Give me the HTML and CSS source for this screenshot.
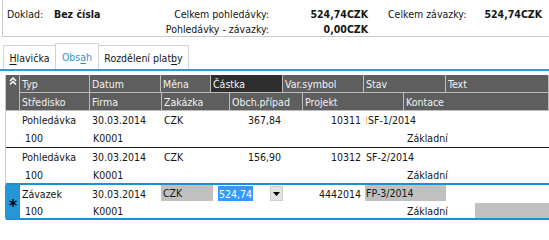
FILE: index.html
```html
<!DOCTYPE html>
<html lang="cs">
<head>
<meta charset="utf-8">
<title>Doklad</title>
<link rel="stylesheet" href="styles.css">
</head>
<body>
<div class="summary">
  <span class="s-lbl c1 r1">Doklad:</span>
  <span class="s-bold c2 r1">Bez čísla</span>
  <span class="s-lbl c3 r1 right">Celkem pohledávky:</span>
  <span class="s-bold c4 r1 right">524,74CZK</span>
  <span class="s-lbl c6 r1">Celkem závazky:</span>
  <span class="s-bold c7 r1 right">524,74CZK</span>
  <span class="s-lbl c3 r2 right">Pohledávky - závazky:</span>
  <span class="s-bold c4 r2 right">0,00CZK</span>
</div>

<div class="tabs">
  <div class="tab t1"><u>H</u>lavička</div>
  <div class="tab t2 active">Obs<u>a</u>h</div>
  <div class="tab t3">Rozdělení plat<u>b</u>y</div>
</div>

<div class="grid">
  <div class="ghead">
    <div class="hsel">
      <svg class="chev" width="8" height="8" viewBox="0 0 8 8"><polyline points="1,4 4,1 7,4" fill="none" stroke="#fff" stroke-width="1.5"/><polyline points="1,7.5 4,4.5 7,7.5" fill="none" stroke="#fff" stroke-width="1.5"/></svg>
    </div>
    <div class="hbody">
      <div class="hrow">
        <div class="hc w70">Typ</div>
        <div class="hc w71">Datum</div>
        <div class="hc w50">Měna</div>
        <div class="hc w72 sorted">Částka</div>
        <div class="hc w81">Var.symbol</div>
        <div class="hc w82">Stav</div>
        <div class="hc grow">Text</div>
      </div>
      <div class="hrow">
        <div class="hc w70">Středisko</div>
        <div class="hc w72">Firma</div>
        <div class="hc w68">Zakázka</div>
        <div class="hc w73">Obch.případ</div>
        <div class="hc w101">Projekt</div>
        <div class="hc grow">Kontace</div>
      </div>
    </div>
  </div>

  <div class="rec">
    <div class="rsel"></div>
    <div class="rbody">
      <div class="line">
        <div class="c w70">Pohledávka</div>
        <div class="c w71">30.03.2014</div>
        <div class="c w50 pl3">CZK</div>
        <div class="c w72 num">367,84</div>
        <div class="c w81 num2">10311</div>
        <div class="c w82"><span class="caret"></span>SF-1/2014</div>
        <div class="c grow"></div>
      </div>
      <div class="line">
        <div class="c w70 pl5">100</div>
        <div class="c w72 pl3">K0001</div>
        <div class="c w68"></div>
        <div class="c w73"></div>
        <div class="c w101"></div>
        <div class="c grow pl3">Základní</div>
      </div>
    </div>
  </div>

  <div class="rec">
    <div class="rsel"></div>
    <div class="rbody">
      <div class="line">
        <div class="c w70">Pohledávka</div>
        <div class="c w71">30.03.2014</div>
        <div class="c w50 pl3">CZK</div>
        <div class="c w72 num">156,90</div>
        <div class="c w81 num2">10312</div>
        <div class="c w82 pl2">SF-2/2014</div>
        <div class="c grow"></div>
      </div>
      <div class="line">
        <div class="c w70 pl5">100</div>
        <div class="c w72 pl3">K0001</div>
        <div class="c w68"></div>
        <div class="c w73"></div>
        <div class="c w101"></div>
        <div class="c grow pl3">Základní</div>
      </div>
    </div>
  </div>

  <div class="rec selected">
    <div class="rsel blue">
      <svg width="8" height="8" viewBox="0 0 8 8"><g stroke="#000" stroke-width="1.3"><line x1="4" y1="0" x2="4" y2="8"/><line x1="0.5" y1="2" x2="7.5" y2="6"/><line x1="0.5" y1="6" x2="7.5" y2="2"/></g></svg>
    </div>
    <div class="rbody">
      <div class="line l1">
        <div class="c w70">Závazek</div>
        <div class="c w71">30.03.2014</div>
        <div class="c w52 graycell">CZK</div>
        <div class="c w70 editor">
          <span class="seltext">524,74</span>
          <span class="dd"><svg width="7" height="4" viewBox="0 0 7 4"><polygon points="0,0 7,0 3.5,4" fill="#000"/></svg></span>
        </div>
        <div class="c w81 num2">4442014</div>
        <div class="c w82 graycell stav">FP-3/2014</div>
        <div class="c grow"></div>
      </div>
      <div class="line l2">
        <div class="c w70 pl5">100</div>
        <div class="c w72 pl3">K0001</div>
        <div class="c w68"></div>
        <div class="c w73"></div>
        <div class="c w101"></div>
        <div class="c grow pl3 kontace"><span>Základní</span><span class="grayfill"></span></div>
      </div>
    </div>
  </div>
</div>
</body>
</html>
```

FILE: styles.css
```css
* { box-sizing: border-box; }

body {
  margin: 0;
  width: 549px;
  height: 220px;
  overflow: hidden;
  background: #fff;
  color: #151515;
  font-family: "DejaVu Sans Condensed", "DejaVu Sans", sans-serif;
  font-stretch: condensed;
  font-size: 10.5px;
}

/* summary panel */
.summary {
  margin-left: 2px;
  height: 37px;
  padding: 6px 0 0 4px;
  border-left: 1px solid #c9c9c9;
  border-bottom: 1px solid #c9c9c9;
  display: grid;
  grid-template-columns: 47px 60px 155px 99px 20px 80px 74px;
  grid-template-rows: 15px 15px;
  align-items: center;
  white-space: nowrap;
}
.s-bold { font-weight: bold; }
.right { text-align: right; }
.c1 { grid-column: 1; }
.c2 { grid-column: 2; }
.c3 { grid-column: 3; }
.c4 { grid-column: 4; }
.c6 { grid-column: 6; }
.c7 { grid-column: 7; }
.r1 { grid-row: 1; }
.r2 { grid-row: 2; }

/* tabs */
.tabs {
  height: 34px;
  padding-left: 3px;
  display: flex;
  align-items: flex-end;
  border-bottom: 2px solid #2a9ed6;
}
.tab {
  height: 24px;
  border: 1px solid #d3d3d3;
  border-bottom: none;
  margin-right: -1px;
  display: flex;
  align-items: center;
  justify-content: center;
  white-space: nowrap;
}
.tab u { text-decoration: underline; text-underline-offset: 2px; }
.t1 { width: 53px; }
.t2 { width: 44px; }
.t3 { width: 91px; }
.tab.active {
  height: 26px;
  padding-top: 1px;
  color: #2f95cf;
  position: relative;
  z-index: 1;
}

/* grid */
.grid {
  margin: 4px 0 0 5px;
  border-left: 1px solid #c8c8c8;
}
.ghead { display: flex; height: 36px; }
.hsel {
  width: 14px;
  flex: none;
  background: #5e5e5e;
  border-right: 1px solid #bdbdbd;
  border-bottom: 1px solid #bdbdbd;
  padding: 2px 0 0 3px;
}
.chev { display: block; }
.hbody { flex: 1; display: flex; flex-direction: column; }
.hrow { display: flex; height: 18px; }
.hc {
  flex: none;
  height: 18px;
  padding: 0 2px;
  background: #5e5e5e;
  color: #f2f2f2;
  border-right: 1px solid #bdbdbd;
  border-bottom: 1px solid #bdbdbd;
  display: flex;
  align-items: center;
  white-space: nowrap;
  overflow: hidden;
}
.hc.sorted { background: #2e2e2e; }
.hc.grow, .c.grow { flex: 1; }

.w50 { width: 50px; }
.w52 { width: 52px; }
.w68 { width: 68px; }
.w70 { width: 70px; }
.w71 { width: 71px; }
.w72 { width: 72px; }
.w73 { width: 73px; }
.w81 { width: 81px; }
.w82 { width: 82px; }
.w101 { width: 101px; }

.rec {
  display: flex;
  border-bottom: 1px solid #1c1c1c;
}
.rsel { width: 14px; flex: none; }
.rbody { flex: 1; display: flex; flex-direction: column; }
.line { display: flex; height: 18px; }
.c {
  flex: none;
  padding: 0 2px;
  display: flex;
  align-items: center;
  white-space: nowrap;
  overflow: hidden;
}
.pl2 { padding-left: 2px; }
.pl3 { padding-left: 3px; }
.pl5 { padding-left: 5px; }
.num { justify-content: flex-end; padding-right: 2px; }
.num2 { justify-content: flex-end; padding-right: 3px; }
.caret {
  display: inline-block;
  width: 1px;
  height: 9px;
  background: #f3c891;
  margin-right: 1px;
}

/* selected record */
.rec.selected {
  margin-top: -2px;
  border-top: 2px solid #1e8fd3;
  border-bottom: 2px solid #1e8fd3;
}
.rsel.blue {
  background: #2596d8;
  margin-left: -1px;
  width: 15px;
  display: flex;
  align-items: center;
  justify-content: center;
  padding-top: 2px;
}
.line.l2 { height: 15px; }
.graycell {
  background: #c0c0c0;
  margin-bottom: 2px;
}
.stav { margin-left: 1px; width: 81px; padding-left: 1px; }
.editor { padding: 1px 0 2px 5px; align-items: stretch; }
.seltext {
  background: #3399ff;
  color: #fff;
  display: flex;
  align-items: center;
  padding: 0 1px;
}
.dd {
  margin-left: auto;
  width: 13px;
  background: #e3e3e3;
  border: 1px solid #cfcfcf;
  display: flex;
  align-items: center;
  justify-content: center;
}
.dd svg { display: block; }
.kontace { align-items: stretch; padding-right: 0; }
.kontace span:first-child { display: flex; align-items: center; }
.grayfill {
  margin-left: auto;
  width: 74px;
  background: #c0c0c0;
}
```
